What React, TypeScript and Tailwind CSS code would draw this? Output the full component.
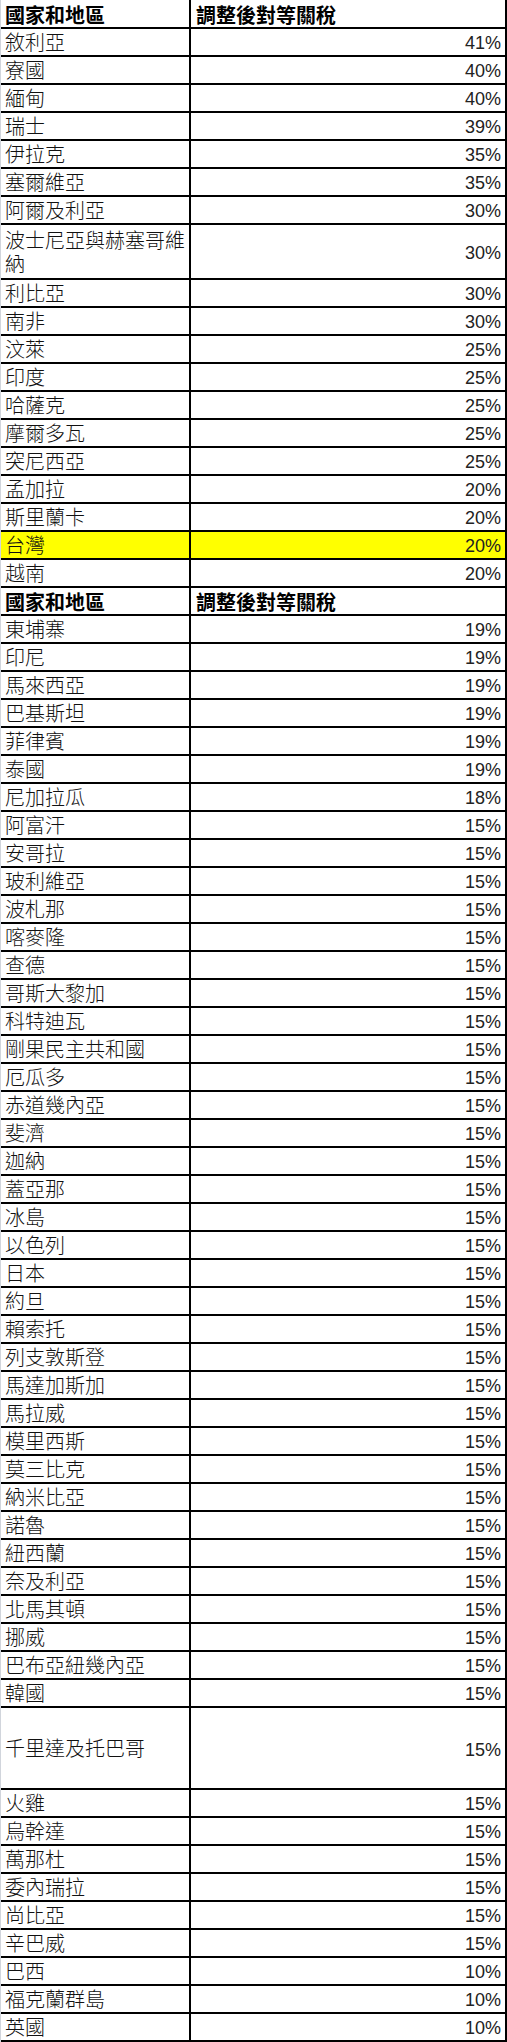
import clsx from 'clsx'

type Row = {
  name: string
  rate: string
  size?: 'double' | 'tall'
  highlight?: boolean
}

// 第一段：稅率 20% 以上
const upper: Row[] = [
  { name: '敘利亞', rate: '41%' },
  { name: '寮國', rate: '40%' },
  { name: '緬甸', rate: '40%' },
  { name: '瑞士', rate: '39%' },
  { name: '伊拉克', rate: '35%' },
  { name: '塞爾維亞', rate: '35%' },
  { name: '阿爾及利亞', rate: '30%' },
  { name: '波士尼亞與赫塞哥維納', rate: '30%', size: 'double' },
  { name: '利比亞', rate: '30%' },
  { name: '南非', rate: '30%' },
  { name: '汶萊', rate: '25%' },
  { name: '印度', rate: '25%' },
  { name: '哈薩克', rate: '25%' },
  { name: '摩爾多瓦', rate: '25%' },
  { name: '突尼西亞', rate: '25%' },
  { name: '孟加拉', rate: '20%' },
  { name: '斯里蘭卡', rate: '20%' },
  { name: '台灣', rate: '20%', highlight: true },
  { name: '越南', rate: '20%' },
]

const fifteen = [
  '阿富汗', '安哥拉', '玻利維亞', '波札那', '喀麥隆', '查德', '哥斯大黎加', '科特迪瓦',
  '剛果民主共和國', '厄瓜多', '赤道幾內亞', '斐濟', '迦納', '蓋亞那', '冰島', '以色列',
  '日本', '約旦', '賴索托', '列支敦斯登', '馬達加斯加', '馬拉威', '模里西斯', '莫三比克',
  '納米比亞', '諾魯', '紐西蘭', '奈及利亞', '北馬其頓', '挪威', '巴布亞紐幾內亞', '韓國',
]

// 第二段：稅率 20% 以下
const lower: Row[] = [
  ...['東埔寨', '印尼', '馬來西亞', '巴基斯坦', '菲律賓', '泰國'].map((name) => ({ name, rate: '19%' })),
  { name: '尼加拉瓜', rate: '18%' },
  ...fifteen.map((name) => ({ name, rate: '15%' })),
  { name: '千里達及托巴哥', rate: '15%', size: 'tall' },
  ...['火雞', '烏幹達', '萬那杜', '委內瑞拉', '尚比亞', '辛巴威'].map((name) => ({ name, rate: '15%' })),
  ...['巴西', '福克蘭群島', '英國'].map((name) => ({ name, rate: '10%' })),
]

function HeaderRow({ first }: { first?: boolean }) {
  return (
    <div className={clsx('flex border-b-2 border-black', first ? 'h-[29px]' : 'h-[28px]')}>
      <div className="w-[190px] shrink-0 border-r-2 border-black pl-1 flex items-end pb-[2px]">
        <span className="text-[20px] leading-5 font-bold text-black">國家和地區</span>
      </div>
      <div className="flex-1 border-r-2 border-black pl-[5px] flex items-end pb-[2px]">
        <span className="text-[20px] leading-5 font-bold text-black">調整後對等關稅</span>
      </div>
    </div>
  )
}

function TariffRow({ row }: { row: Row }) {
  const centered = !!row.size
  return (
    <div
      className={clsx(
        'flex border-b-2 border-black',
        row.size === 'double' ? 'h-[55px]' : row.size === 'tall' ? 'h-[82px]' : 'h-[28px]',
        row.highlight ? 'bg-[#ffff00]' : 'bg-white'
      )}
    >
      <div
        className={clsx(
          'w-[190px] shrink-0 border-r-2 border-black pl-1 flex',
          centered ? 'items-center' : 'items-end pb-[3px]'
        )}
      >
        <span
          className={clsx(
            'text-[20px] font-light text-[#111]',
            row.size === 'double' ? 'leading-6' : 'leading-5'
          )}
        >
          {row.name}
        </span>
      </div>
      <div
        className={clsx(
          'flex-1 border-r-2 border-black pr-1 flex justify-end',
          centered ? 'items-center pt-[3px]' : 'items-end pb-[2px]'
        )}
      >
        <span className="font-['Liberation_Sans',sans-serif] text-[18px] leading-5 text-[#222]">{row.rate}</span>
      </div>
    </div>
  )
}

export default function App() {
  return (
    <div className="w-[507px] bg-white border-l border-gray-300 font-['Noto_Sans_CJK_TC',sans-serif]">
      <HeaderRow first />
      {upper.map((r) => (
        <TariffRow key={r.name} row={r} />
      ))}
      <HeaderRow />
      {lower.map((r) => (
        <TariffRow key={r.name} row={r} />
      ))}
    </div>
  )
}
